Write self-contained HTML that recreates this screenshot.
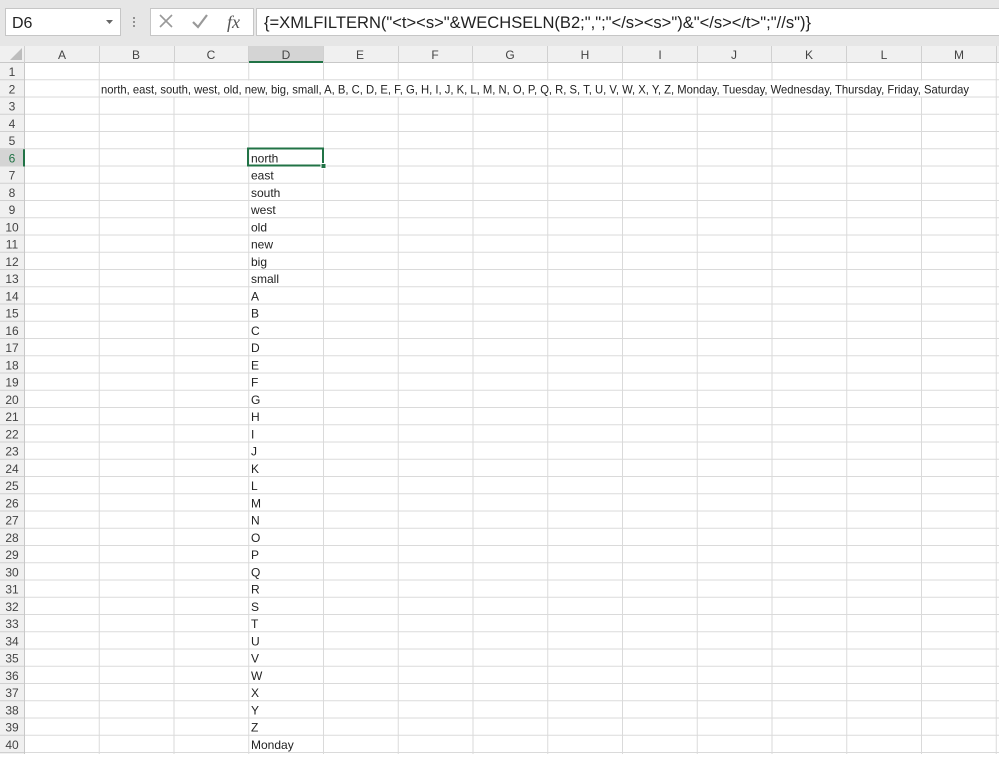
<!DOCTYPE html>
<html><head><meta charset="utf-8"><style>
body{margin:0;width:999px;height:754px;overflow:hidden;background:#fff;font-family:"Liberation Sans",sans-serif}
svg text{font-family:"Liberation Sans",sans-serif}
</style></head><body>
<svg width="999" height="754" xmlns="http://www.w3.org/2000/svg">
<defs>
<pattern id="g" x="25" y="63" width="74.75" height="17.25" patternUnits="userSpaceOnUse">
<rect width="74.75" height="17.25" fill="#fff"/>
<line x1="74.25" y1="0" x2="74.25" y2="17.25" stroke="#dadada" stroke-width="1"/>
<line x1="0" y1="16.75" x2="74.75" y2="16.75" stroke="#dadada" stroke-width="1"/>
</pattern>
<pattern id="rh" x="0" y="63" width="25" height="17.25" patternUnits="userSpaceOnUse">
<rect width="25" height="17.25" fill="#f0f0f0"/>
<line x1="0" y1="16.75" x2="25" y2="16.75" stroke="#d0d0d0"/>
</pattern>
</defs>
<!-- toolbar -->
<rect x="0" y="0" width="999" height="46" fill="#e6e6e6"/>
<rect x="5.5" y="8.5" width="115" height="27" fill="#fff" stroke="#c6c6c6"/>
<text x="12" y="28" font-size="16" fill="#222">D6</text>
<path d="M106 20 l3.5 4 l3.5 -4z" fill="#666"/>
<circle cx="134" cy="18" r="1" fill="#777"/><circle cx="134" cy="22" r="1" fill="#777"/><circle cx="134" cy="26" r="1" fill="#777"/>
<rect x="150.5" y="8.5" width="103" height="27" fill="#fff" stroke="#c6c6c6"/>
<path d="M160 15 l12 12 M172 15 l-12 12" stroke="#999" stroke-width="1.6"/>
<path d="M193 22 l5 5 l9 -12" stroke="#999" stroke-width="2.2" fill="none"/>
<text x="227" y="28" font-size="18" font-style="italic" font-family="Liberation Serif" fill="#555" style="font-family:'Liberation Serif',serif">fx</text>
<rect x="256.5" y="8.5" width="745" height="27" fill="#fff" stroke="#c6c6c6"/>
<text x="264" y="28" font-size="17" fill="#222" textLength="547" lengthAdjust="spacingAndGlyphs">{=XMLFILTERN("&lt;t&gt;&lt;s&gt;"&amp;WECHSELN(B2;",";"&lt;/s&gt;&lt;s&gt;")&amp;"&lt;/s&gt;&lt;/t&gt;";"//s")}</text>
<!-- col headers -->
<rect x="0" y="46" width="999" height="17" fill="#f0f0f0"/>
<line x1="0" y1="62.5" x2="999" y2="62.5" stroke="#c8c8c8"/>
<rect x="248" y="46" width="75" height="17" fill="#d4d4d4"/>
<rect x="248" y="61" width="75" height="2" fill="#217346"/>
<path d="M22 48 v12 h-12z" fill="#bdbdbd"/>
<g stroke="#d0d0d0"><line x1="24.5" y1="46" x2="24.5" y2="63"/><line x1="99.5" y1="46" x2="99.5" y2="63"/><line x1="174.5" y1="46" x2="174.5" y2="63"/><line x1="248.5" y1="46" x2="248.5" y2="63"/><line x1="323.5" y1="46" x2="323.5" y2="63"/><line x1="398.5" y1="46" x2="398.5" y2="63"/><line x1="472.5" y1="46" x2="472.5" y2="63"/><line x1="547.5" y1="46" x2="547.5" y2="63"/><line x1="622.5" y1="46" x2="622.5" y2="63"/><line x1="697.5" y1="46" x2="697.5" y2="63"/><line x1="771.5" y1="46" x2="771.5" y2="63"/><line x1="846.5" y1="46" x2="846.5" y2="63"/><line x1="921.5" y1="46" x2="921.5" y2="63"/><line x1="996.5" y1="46" x2="996.5" y2="63"/></g>
<g font-size="12" fill="#444" text-anchor="middle">
<text x="62" y="59">A</text><text x="136" y="59">B</text><text x="211" y="59">C</text><text x="286" y="59">D</text><text x="360" y="59">E</text><text x="435" y="59">F</text><text x="510" y="59">G</text><text x="585" y="59">H</text><text x="660" y="59">I</text><text x="734" y="59">J</text><text x="809" y="59">K</text><text x="884" y="59">L</text><text x="959" y="59">M</text>
</g>
<!-- grid -->
<rect x="25" y="63" width="974" height="691" fill="url(#g)"/>
<rect x="0" y="63" width="25" height="691" fill="url(#rh)"/>
<line x1="24.5" y1="63" x2="24.5" y2="754" stroke="#c8c8c8"/>
<rect x="0" y="149.25" width="25" height="17.25" fill="#d4d4d4"/>
<rect x="23" y="149.25" width="2" height="17.25" fill="#217346"/>
<!-- row 2 text -->
<rect x="100" y="80.5" width="870" height="16" fill="#fff"/>
<text x="101" y="93.5" font-size="12" fill="#222" textLength="868" lengthAdjust="spacingAndGlyphs">north, east, south, west, old, new, big, small, A, B, C, D, E, F, G, H, I, J, K, L, M, N, O, P, Q, R, S, T, U, V, W, X, Y, Z, Monday, Tuesday, Wednesday, Thursday, Friday, Saturday</text>
<!-- selection -->
<rect x="248" y="148.5" width="75" height="17" fill="none" stroke="#217346" stroke-width="2"/>
<rect x="321" y="163.5" width="5" height="5" fill="#217346" stroke="#fff" stroke-width="1"/>
<!-- row numbers -->
<g font-size="12" fill="#444" text-anchor="middle">
<text x="12" y="76">1</text><text x="12" y="93.25">2</text><text x="12" y="110.5">3</text><text x="12" y="127.75">4</text><text x="12" y="145">5</text><text x="12" y="162.25" fill="#217346">6</text><text x="12" y="179.5">7</text><text x="12" y="196.75">8</text><text x="12" y="214">9</text><text x="12" y="231.25">10</text><text x="12" y="248.5">11</text><text x="12" y="265.75">12</text><text x="12" y="283">13</text><text x="12" y="300.25">14</text><text x="12" y="317.5">15</text><text x="12" y="334.75">16</text><text x="12" y="352">17</text><text x="12" y="369.25">18</text><text x="12" y="386.5">19</text><text x="12" y="403.75">20</text><text x="12" y="421">21</text><text x="12" y="438.25">22</text><text x="12" y="455.5">23</text><text x="12" y="472.75">24</text><text x="12" y="490">25</text><text x="12" y="507.25">26</text><text x="12" y="524.5">27</text><text x="12" y="541.75">28</text><text x="12" y="559">29</text><text x="12" y="576.25">30</text><text x="12" y="593.5">31</text><text x="12" y="610.75">32</text><text x="12" y="628">33</text><text x="12" y="645.25">34</text><text x="12" y="662.5">35</text><text x="12" y="679.75">36</text><text x="12" y="697">37</text><text x="12" y="714.25">38</text><text x="12" y="731.5">39</text><text x="12" y="748.75">40</text>
</g>
<!-- column D values -->
<g font-size="12" fill="#222">
<text x="251" y="162.25">north</text><text x="251" y="179.5">east</text><text x="251" y="196.75">south</text><text x="251" y="214">west</text><text x="251" y="231.25">old</text><text x="251" y="248.5">new</text><text x="251" y="265.75">big</text><text x="251" y="283">small</text><text x="251" y="300.25">A</text><text x="251" y="317.5">B</text><text x="251" y="334.75">C</text><text x="251" y="352">D</text><text x="251" y="369.25">E</text><text x="251" y="386.5">F</text><text x="251" y="403.75">G</text><text x="251" y="421">H</text><text x="251" y="438.25">I</text><text x="251" y="455.5">J</text><text x="251" y="472.75">K</text><text x="251" y="490">L</text><text x="251" y="507.25">M</text><text x="251" y="524.5">N</text><text x="251" y="541.75">O</text><text x="251" y="559">P</text><text x="251" y="576.25">Q</text><text x="251" y="593.5">R</text><text x="251" y="610.75">S</text><text x="251" y="628">T</text><text x="251" y="645.25">U</text><text x="251" y="662.5">V</text><text x="251" y="679.75">W</text><text x="251" y="697">X</text><text x="251" y="714.25">Y</text><text x="251" y="731.5">Z</text><text x="251" y="748.75">Monday</text>
</g>
</svg>
</body></html>
